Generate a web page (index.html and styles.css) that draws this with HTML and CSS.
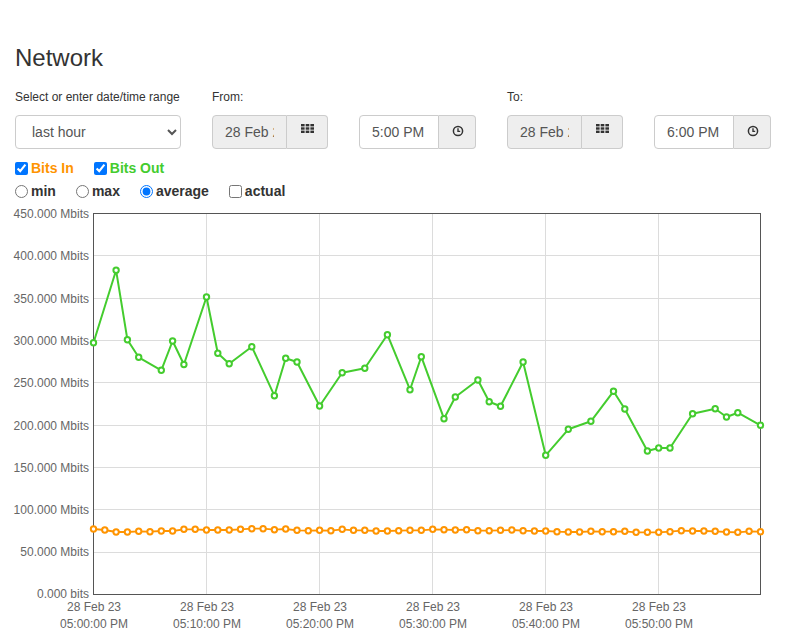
FILE: index.html
```html
<!DOCTYPE html>
<html>
<head>
<meta charset="utf-8">
<title>Network</title>
<link rel="stylesheet" href="styles.css">
</head>
<body>
<h1 class="title">Network</h1>
<div class="controls">
  <div class="col col-range">
    <label class="lbl">Select or enter date/time range</label>
    <select class="sel">
      <option>last hour</option>
    </select>
  </div>
  <div class="col">
    <label class="lbl">From:</label>
    <div class="pair">
      <div class="igroup">
        <input class="inp inp-date" type="text" value="28 Feb 2023" readonly>
        <span class="btn btn-date"><svg class="ic-grid" width="13" height="9" viewBox="0 0 13 9"><g fill="#333"><rect x="0" y="0" width="3.6" height="2.4"/><rect x="4.7" y="0" width="3.6" height="2.4"/><rect x="9.4" y="0" width="3.6" height="2.4"/><rect x="0" y="3.3" width="3.6" height="2.4"/><rect x="4.7" y="3.3" width="3.6" height="2.4"/><rect x="9.4" y="3.3" width="3.6" height="2.4"/><rect x="0" y="6.6" width="3.6" height="2.4"/><rect x="4.7" y="6.6" width="3.6" height="2.4"/><rect x="9.4" y="6.6" width="3.6" height="2.4"/></g></svg></span>
      </div>
      <div class="igroup">
        <input class="inp inp-time" type="text" value="5:00 PM">
        <span class="btn btn-time"><svg class="ic-clock" width="12" height="12" viewBox="0 0 12 12"><circle cx="6" cy="6" r="4.6" fill="none" stroke="#333" stroke-width="1.5"/><path d="M6 3.2V6.4H8.2" fill="none" stroke="#333" stroke-width="1.4"/></svg></span>
      </div>
    </div>
  </div>
  <div class="col">
    <label class="lbl">To:</label>
    <div class="pair">
      <div class="igroup">
        <input class="inp inp-date" type="text" value="28 Feb 2023" readonly>
        <span class="btn btn-date"><svg class="ic-grid" width="13" height="9" viewBox="0 0 13 9"><g fill="#333"><rect x="0" y="0" width="3.6" height="2.4"/><rect x="4.7" y="0" width="3.6" height="2.4"/><rect x="9.4" y="0" width="3.6" height="2.4"/><rect x="0" y="3.3" width="3.6" height="2.4"/><rect x="4.7" y="3.3" width="3.6" height="2.4"/><rect x="9.4" y="3.3" width="3.6" height="2.4"/><rect x="0" y="6.6" width="3.6" height="2.4"/><rect x="4.7" y="6.6" width="3.6" height="2.4"/><rect x="9.4" y="6.6" width="3.6" height="2.4"/></g></svg></span>
      </div>
      <div class="igroup">
        <input class="inp inp-time" type="text" value="6:00 PM">
        <span class="btn btn-time"><svg class="ic-clock" width="12" height="12" viewBox="0 0 12 12"><circle cx="6" cy="6" r="4.6" fill="none" stroke="#333" stroke-width="1.5"/><path d="M6 3.2V6.4H8.2" fill="none" stroke="#333" stroke-width="1.4"/></svg></span>
      </div>
    </div>
  </div>
</div>

<div class="opts">
  <label class="opt in"><input type="checkbox" checked>Bits In</label>
  <label class="opt out"><input type="checkbox" checked>Bits Out</label>
</div>
<div class="opts opts2">
  <label class="opt"><input type="radio" name="m">min</label>
  <label class="opt"><input type="radio" name="m">max</label>
  <label class="opt"><input type="radio" name="m" checked>average</label>
  <label class="opt"><input type="checkbox">actual</label>
</div>

<svg class="chart" width="787" height="429" viewBox="0 205 787 429">
  <defs>
    <marker id="mg" markerWidth="10" markerHeight="10" refX="5" refY="5" markerUnits="userSpaceOnUse">
      <circle cx="5" cy="5" r="2.7" fill="#fff" stroke="#44cc2e" stroke-width="2"/>
    </marker>
    <marker id="mo" markerWidth="10" markerHeight="10" refX="5" refY="5" markerUnits="userSpaceOnUse">
      <circle cx="5" cy="5" r="2.7" fill="#fff" stroke="#ff9400" stroke-width="2"/>
    </marker>
  </defs>
  <g class="grid" stroke="#dcdcdc" stroke-width="1" shape-rendering="crispEdges">
    <line x1="93.5" y1="255.5" x2="760.5" y2="255.5"/>
    <line x1="93.5" y1="298.5" x2="760.5" y2="298.5"/>
    <line x1="93.5" y1="340.5" x2="760.5" y2="340.5"/>
    <line x1="93.5" y1="382.5" x2="760.5" y2="382.5"/>
    <line x1="93.5" y1="425.5" x2="760.5" y2="425.5"/>
    <line x1="93.5" y1="467.5" x2="760.5" y2="467.5"/>
    <line x1="93.5" y1="509.5" x2="760.5" y2="509.5"/>
    <line x1="93.5" y1="552.5" x2="760.5" y2="552.5"/>
    <line x1="206.5" y1="213.5" x2="206.5" y2="594.5"/>
    <line x1="319.5" y1="213.5" x2="319.5" y2="594.5"/>
    <line x1="432.5" y1="213.5" x2="432.5" y2="594.5"/>
    <line x1="545.5" y1="213.5" x2="545.5" y2="594.5"/>
    <line x1="658.5" y1="213.5" x2="658.5" y2="594.5"/>
  </g>
  <rect x="93.5" y="213.5" width="667" height="381" fill="none" stroke="#555" stroke-width="1" shape-rendering="crispEdges"/>
  <g class="ylab" text-anchor="end">
    <text x="89" y="217.5">450.000 Mbits</text>
    <text x="89" y="259.5">400.000 Mbits</text>
    <text x="89" y="302.5">350.000 Mbits</text>
    <text x="89" y="344.5">300.000 Mbits</text>
    <text x="89" y="386.5">250.000 Mbits</text>
    <text x="89" y="429.5">200.000 Mbits</text>
    <text x="89" y="471.5">150.000 Mbits</text>
    <text x="89" y="513.5">100.000 Mbits</text>
    <text x="89" y="556">50.000 Mbits</text>
    <text x="89" y="598">0.000 bits</text>
  </g>
  <g class="xlab" text-anchor="middle">
    <text x="94" y="611">28 Feb 23</text><text x="94" y="628">05:00:00 PM</text>
    <text x="207" y="611">28 Feb 23</text><text x="207" y="628">05:10:00 PM</text>
    <text x="320" y="611">28 Feb 23</text><text x="320" y="628">05:20:00 PM</text>
    <text x="433" y="611">28 Feb 23</text><text x="433" y="628">05:30:00 PM</text>
    <text x="546" y="611">28 Feb 23</text><text x="546" y="628">05:40:00 PM</text>
    <text x="659" y="611">28 Feb 23</text><text x="659" y="628">05:50:00 PM</text>
  </g>
  <polyline class="line-in" fill="none" stroke="#ff9400" stroke-width="1.8" stroke-linejoin="round"
    marker-start="url(#mo)" marker-mid="url(#mo)" marker-end="url(#mo)"
    points="93.5,529 104.8,530 116.1,532 127.4,532 138.7,531.3 150,531.7 161.3,531 172.6,531 183.9,529.3 195.2,529.3 206.5,530 217.8,530 229.2,530 240.5,529.3 251.8,528.7 263.1,528.7 274.4,529.7 285.7,529 297,530.3 308.3,530.7 319.6,530.3 330.9,530.7 342.2,529.3 353.5,530.3 364.8,530.3 376.1,531 387.4,531 398.7,530.7 410,530.3 421.3,530.3 432.7,529.3 444,529.7 455.3,530 466.6,529.7 477.9,530.7 489.2,530.7 500.5,530.3 511.8,530 523.1,530.7 534.4,531 545.7,531 557,531.7 568.3,532 579.6,532 590.9,531.3 602.2,531.7 613.5,531.7 624.8,531.3 636.1,532.3 647.4,532.3 658.7,532.3 670,531.7 681.3,530.7 692.6,531 703.9,531 715.2,531.3 726.5,532 737.8,532.3 749.1,531.3 760.5,531.7"/>
  <polyline class="line-out" fill="none" stroke="#44cc2e" stroke-width="2" stroke-linejoin="round"
    marker-start="url(#mg)" marker-mid="url(#mg)" marker-end="url(#mg)"
    points="93.5,342.7 116.1,270.3 127.4,339.7 138.7,357.3 161.3,370.3 172.6,341 183.9,364.5 206.5,297 217.8,353.3 229.2,363.7 251.8,346.7 274.4,395.7 285.7,358.3 297,362 319.6,406 342.2,372.7 364.8,368.3 387.4,334.7 410,389.7 421.3,356.7 444,418.7 455.3,397 477.9,380 489.2,401.7 500.5,406.3 523.1,362 545.7,455.3 568.3,429.3 590.9,421.3 613.5,391.3 624.8,409 647.4,451 658.7,448 670,448 692.6,413.7 715.2,408.7 726.5,417 737.8,412.7 760.5,425.3"/>
</svg>
</body>
</html>
```
FILE: styles.css
```css
html, body {
  margin: 0;
  padding: 0;
  background: #fff;
}
body {
  padding: 44px 15px 0 15px;
  font-family: "Liberation Sans", Arial, Helvetica, sans-serif;
  font-size: 14px;
  color: #333;
}
.title {
  margin: 0;
  font-size: 24px;
  line-height: 27px;
  font-weight: normal;
  color: #333;
}
.controls {
  display: flex;
  gap: 31px;
  margin-top: 18px;
}
.col {
  display: flex;
  flex-direction: column;
}
.lbl {
  display: block;
  font-size: 12px;
  line-height: 17px;
  margin-bottom: 9px;
  color: #333;
}
.sel {
  box-sizing: border-box;
  width: 166px;
  height: 34px;
  padding: 0 8px 0 12px;
  font-family: "Liberation Sans", Arial, sans-serif;
  font-size: 14px;
  color: #555;
  background: #fff;
  border: 1px solid #ccc;
  border-radius: 4px;
}
.pair {
  display: flex;
  gap: 31px;
}
.igroup {
  display: flex;
  height: 34px;
}
.inp {
  box-sizing: border-box;
  height: 34px;
  margin: 0;
  padding: 0 12px;
  font-family: "Liberation Sans", Arial, sans-serif;
  font-size: 14px;
  color: #555;
  border: 1px solid #ccc;
  border-radius: 4px 0 0 4px;
  background: #fff;
  outline: none;
}
.inp-date {
  width: 75px;
  background: #eee;
}
.inp-time {
  width: 80px;
}
.btn {
  box-sizing: border-box;
  display: flex;
  align-items: center;
  justify-content: center;
  height: 34px;
  background: #eee;
  border: 1px solid #ccc;
  border-left: none;
  border-radius: 0 4px 4px 0;
}
.btn-date {
  width: 41px;
}
.btn-time {
  width: 37px;
}
.ic-grid {
  display: block;
  margin-bottom: 8px;
}
.ic-clock {
  display: block;
  margin-bottom: 2px;
  margin-left: 1px;
}
.opts {
  display: flex;
  gap: 20px;
  margin-top: 9px;
  height: 20px;
}
.opts2 {
  margin-top: 3px;
}
.opt {
  display: inline-flex;
  align-items: center;
  gap: 3px;
  font-size: 14px;
  line-height: 20px;
  font-weight: bold;
  color: #333;
}
.opt input {
  margin: 0;
  width: 13px;
  height: 13px;
}
.opt.in {
  color: #ff9400;
}
.opt.out {
  color: #44cc2e;
}
.chart {
  display: block;
  margin: 4px 0 0 -15px;
}
.ylab text, .xlab text {
  font-family: "Liberation Sans", Arial, sans-serif;
  font-size: 12px;
  fill: #666;
}
```
